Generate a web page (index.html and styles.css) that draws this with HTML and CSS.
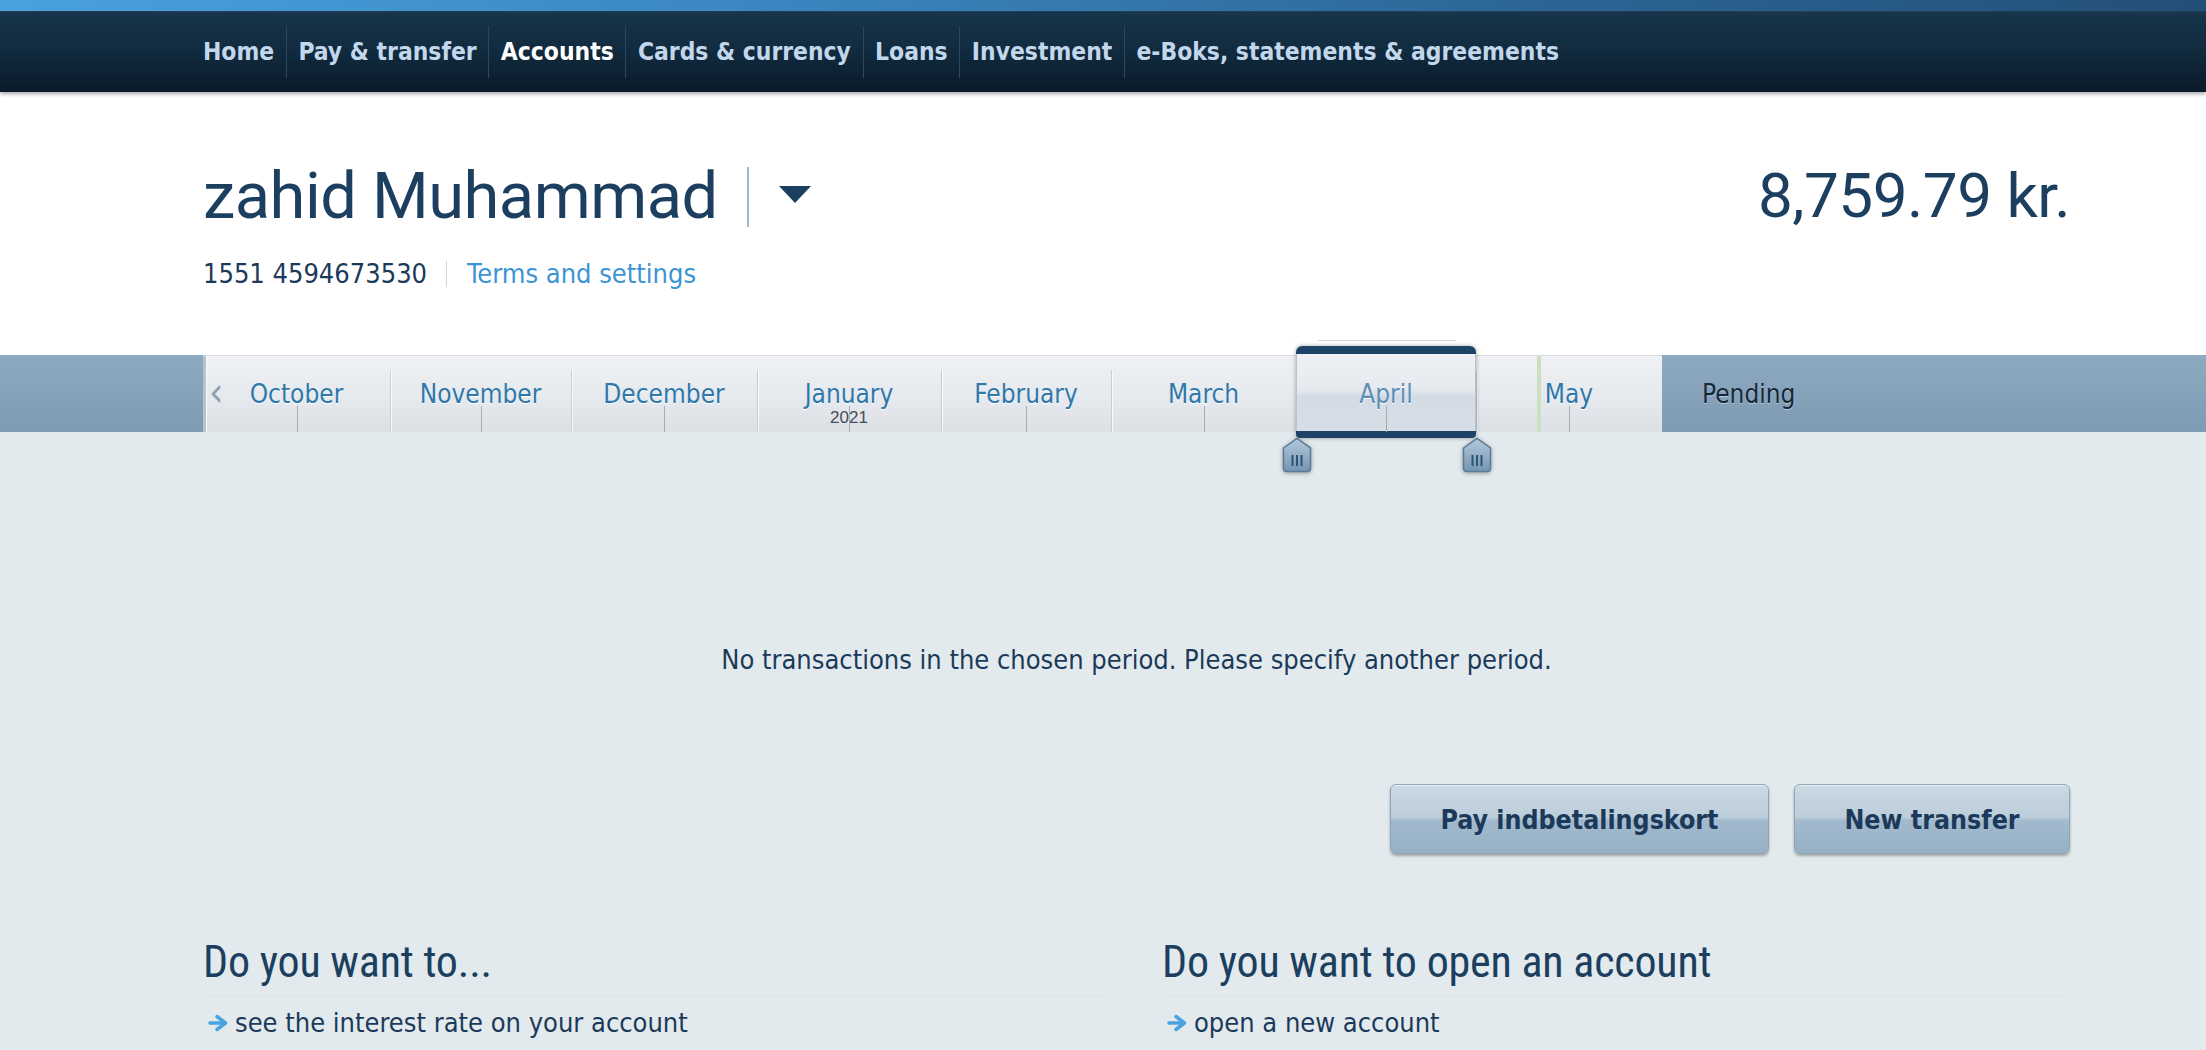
FILE: index.html
```
<!DOCTYPE html>
<html lang="en">
<head>
<meta charset="utf-8">
<title>Accounts</title>
<link rel="stylesheet" href="styles.css">
</head>
<body>
<header class="topnav">
  <div class="topnav__strip"></div>
  <nav class="topnav__bar">
    <ul class="topnav__list">
      <li class="topnav__item">Home</li>
      <li class="topnav__item">Pay &amp; transfer</li>
      <li class="topnav__item topnav__item--active">Accounts</li>
      <li class="topnav__item">Cards &amp; currency</li>
      <li class="topnav__item">Loans</li>
      <li class="topnav__item">Investment</li>
      <li class="topnav__item">e-Boks, statements &amp; agreements</li>
    </ul>
  </nav>
</header>

<section class="account-head">
  <div class="container account-head__row">
    <div class="account-head__title">
      <h1 class="account-name">zahid Muhammad</h1>
      <span class="account-sep"></span>
      <span class="account-toggle">
        <svg width="32" height="17" viewBox="0 0 32 17"><path d="M0 0 H32 L16 17 Z" fill="#1d3f5f"/></svg>
      </span>
    </div>
    <div class="account-balance">8,759.79 kr.</div>
  </div>
  <div class="container account-meta">
    <span class="account-number">1551 4594673530</span>
    <span class="meta-sep"></span>
    <a class="meta-link" href="#">Terms and settings</a>
  </div>
</section>

<section class="period">
  <div class="period__lead"></div>
  <div class="period__months">
    <div class="month month--first"><span class="month__arrow">‹</span><span class="month__label">October</span></div>
    <div class="month"><span class="month__label">November</span></div>
    <div class="month"><span class="month__label">December</span></div>
    <div class="month"><span class="month__label">January</span><span class="month__year">2021</span></div>
    <div class="month"><span class="month__label">February</span></div>
    <div class="month"><span class="month__label">March</span></div>
    <div class="month month--selected">
      <span class="selector"></span>
      <span class="selector__topline"></span>
      <span class="month__label">April</span>
      <svg class="handle handle--left" width="30" height="36" viewBox="0 0 30 36">
        <defs><linearGradient id="hg1" x1="0" y1="0" x2="0" y2="1"><stop offset="0" stop-color="#b3c9dc"/><stop offset="1" stop-color="#7595b1"/></linearGradient></defs>
        <path d="M1.5 11 L15 1.5 L28.5 11 V31 Q28.5 34.5 25 34.5 H5 Q1.5 34.5 1.5 31 Z" fill="url(#hg1)" stroke="#5a7b98" stroke-width="1.5"/>
        <path d="M10.5 18 V29 M15 18 V29 M19.5 18 V29" stroke="#2c5475" stroke-width="2"/>
      </svg>
      <svg class="handle handle--right" width="30" height="36" viewBox="0 0 30 36">
        <defs><linearGradient id="hg2" x1="0" y1="0" x2="0" y2="1"><stop offset="0" stop-color="#b3c9dc"/><stop offset="1" stop-color="#7595b1"/></linearGradient></defs>
        <path d="M1.5 11 L15 1.5 L28.5 11 V31 Q28.5 34.5 25 34.5 H5 Q1.5 34.5 1.5 31 Z" fill="url(#hg2)" stroke="#5a7b98" stroke-width="1.5"/>
        <path d="M10.5 18 V29 M15 18 V29 M19.5 18 V29" stroke="#2c5475" stroke-width="2"/>
      </svg>
    </div>
    <div class="month month--current"><span class="month__today"></span><span class="month__label">May</span></div>
  </div>
  <div class="period__pending">Pending</div>
</section>

<main class="main">
  <p class="container empty">No transactions in the chosen period. Please specify another period.</p>
  <div class="container actions">
    <button class="btn btn--wide">Pay indbetalingskort</button>
    <button class="btn btn--narrow">New transfer</button>
  </div>
  <div class="container promo">
    <div class="promo__col">
      <h2 class="promo__title">Do you want to...</h2>
      <a class="promo__link" href="#">
        <svg width="20" height="18" viewBox="0 0 20 18"><path d="M2 9 H15" stroke="#4aa3e0" stroke-width="3.5" stroke-linecap="round"/><path d="M9 2.5 L17.5 9 L9 15.5" fill="none" stroke="#4aa3e0" stroke-width="3.5" stroke-linecap="round" stroke-linejoin="round"/></svg>
        <span>see the interest rate on your account</span>
      </a>
    </div>
    <div class="promo__col">
      <h2 class="promo__title">Do you want to open an account</h2>
      <a class="promo__link" href="#">
        <svg width="20" height="18" viewBox="0 0 20 18"><path d="M2 9 H15" stroke="#4aa3e0" stroke-width="3.5" stroke-linecap="round"/><path d="M9 2.5 L17.5 9 L9 15.5" fill="none" stroke="#4aa3e0" stroke-width="3.5" stroke-linecap="round" stroke-linejoin="round"/></svg>
        <span>open a new account</span>
      </a>
    </div>
  </div>
</main>
</body>
</html>
```

FILE: styles.css
```
* { box-sizing: border-box; }

html, body {
  margin: 0;
  padding: 0;
}

body {
  width: 2206px;
  height: 1050px;
  overflow: hidden;
  background: #e3eaed;
  font-family: "DejaVu Sans Condensed", "DejaVu Sans", sans-serif;
  font-stretch: condensed;
  color: #1b3a5a;
}

.container {
  margin-left: 203px;
  width: 1867px;
}

/* ---------- top navigation ---------- */
.topnav {
  position: relative;
  z-index: 2;
  box-shadow: 0 2px 4px rgba(0, 0, 0, 0.35);
}

.topnav__strip {
  height: 11px;
  background: linear-gradient(90deg, #4aa1de 0%, #3a86c0 35%, #2c6595 70%, #234f77 100%);
}

.topnav__bar {
  height: 81px;
  background: linear-gradient(180deg, #18354b 0%, #112a3e 50%, #0a1a2a 100%);
  border-top: 1px solid #1f3f56;
  display: flex;
  align-items: center;
}

.topnav__list {
  list-style: none;
  margin: 0 0 0 203px;
  padding: 0;
  display: flex;
  align-items: center;
}

.topnav__item {
  font-weight: bold;
  font-size: 24.4px;
  color: #c3d7ec;
  padding: 0 11.6px;
  height: 52px;
  line-height: 52px;
  border-left: 1px solid #2a4860;
  white-space: nowrap;
}

.topnav__item:first-child {
  padding-left: 0;
  border-left: none;
}

.topnav__item--active {
  color: #ffffff;
}

/* ---------- account header ---------- */
.account-head {
  background: #ffffff;
  padding-top: 72px;
  padding-bottom: 65px;
}

.account-head__row {
  display: flex;
  justify-content: space-between;
  align-items: flex-start;
}

.account-head__title {
  display: flex;
  align-items: center;
}

.account-name {
  margin: 0;
  font-family: Roboto, "Liberation Sans", sans-serif;
  font-stretch: normal;
  font-weight: 400;
  font-size: 65px;
  line-height: 64px;
  letter-spacing: -0.5px;
  color: #1c3f5f;
}

.account-sep {
  width: 2px;
  height: 60px;
  background: #a3b7c9;
  margin-left: 29px;
  margin-top: 2px;
}

.account-toggle {
  display: flex;
  margin-left: 30px;
  margin-top: -4px;
}

.account-balance {
  font-family: Roboto, "Liberation Sans", sans-serif;
  font-stretch: normal;
  font-size: 62px;
  line-height: 64px;
  letter-spacing: -0.5px;
  color: #1c3f5f;
}

.account-meta {
  margin-top: 30px;
  display: flex;
  align-items: center;
  font-size: 27px;
  line-height: 32px;
}

.account-number {
  color: #1b3a5a;
}

.meta-sep {
  width: 1px;
  height: 26px;
  background: #cfd6dd;
  margin: 0 20px 0 19px;
}

.meta-link {
  color: #3b94d4;
  text-decoration: none;
}

/* ---------- period selector ---------- */
.period {
  display: flex;
  height: 77px;
  background: linear-gradient(180deg, #8eaac1 0%, #7f9bb3 100%);
  position: relative;
  z-index: 1;
}

.period__lead {
  width: 203px;
  flex: none;
}

.period__months {
  width: 1459px;
  flex: none;
  display: grid;
  grid-template-columns: 187px 181px 186px 184px 170px 185px 180px 186px;
  background: linear-gradient(180deg, #eff1f4 0%, #e6e9ed 55%, #dcdfe4 100%);
  border-top: 1px solid #d6dbe0;
}

.period__pending {
  flex: 1;
  display: flex;
  align-items: center;
  padding-left: 40px;
  font-size: 26px;
  color: #14283a;
  text-shadow: 0 1px 0 rgba(255, 255, 255, 0.45);
}

.month {
  position: relative;
  display: flex;
  align-items: center;
  justify-content: center;
}

.month::before {
  content: "";
  position: absolute;
  left: 0;
  top: 14px;
  bottom: 0;
  width: 1px;
  background: #c9cdd3;
  box-shadow: 1px 0 0 rgba(255, 255, 255, 0.8);
}

.month::after {
  content: "";
  position: absolute;
  left: 50%;
  top: 50px;
  bottom: 0;
  width: 1px;
  background: #a6acb3;
  z-index: 2;
}

.month--first::before {
  top: 0;
  width: 3px;
  background: #b7c2cc;
}

.month--selected::before {
  display: none;
}

.month__label {
  position: relative;
  z-index: 2;
  font-size: 26px;
  color: #2f78aa;
  text-shadow: 0 1px 0 #ffffff;
  white-space: nowrap;
}

.month--selected .month__label {
  color: #5b8db6;
}

.month__arrow {
  position: absolute;
  left: 6px;
  top: 50%;
  transform: translateY(-54%);
  font-size: 40px;
  color: #8b9fb2;
  font-family: "DejaVu Sans", sans-serif;
}

.month__year {
  position: absolute;
  left: 0;
  right: 0;
  top: 52px;
  text-align: center;
  font-family: "Liberation Sans", Arial, sans-serif;
  font-size: 17px;
  color: #474d55;
}

.month__today {
  position: absolute;
  left: 61px;
  top: 0;
  bottom: 0;
  width: 4px;
  background: #cddfc1;
}

.month--current .month__label {
  z-index: 3;
}

.selector {
  position: absolute;
  left: 0;
  right: 0;
  top: -10px;
  bottom: -6px;
  z-index: 1;
  border-top: 8px solid #1d4466;
  border-bottom: 7px solid #1d4466;
  border-radius: 6px 6px 4px 4px;
  background: linear-gradient(180deg, #eef1f4 0%, #e6eaee 45%, #d3dce4 55%, #d6dee6 100%);
  box-shadow: 0 0 4px rgba(0, 0, 0, 0.35), inset 1px 0 0 #b9c3cc, inset -1px 0 0 #b9c3cc;
}

.selector__topline {
  position: absolute;
  left: 22px;
  right: 20px;
  top: -16px;
  height: 1px;
  background: #cfd9e3;
}

.handle {
  position: absolute;
  top: 81px;
  z-index: 3;
  filter: drop-shadow(0 1px 2px rgba(0, 0, 0, 0.35));
}

.handle--left {
  left: -14px;
}

.handle--right {
  left: 166px;
}

/* ---------- main ---------- */
.main {
  padding-top: 213px;
}

.empty {
  margin-top: 0;
  margin-bottom: 0;
  text-align: center;
  font-size: 27px;
  line-height: 30px;
  color: #1b3a5a;
}

.actions {
  margin-top: 109px;
  display: flex;
  justify-content: flex-end;
  gap: 25px;
}

.btn {
  height: 70px;
  border: 1px solid #8aa4b9;
  border-radius: 6px;
  background: linear-gradient(180deg, #cbd9e3 0%, #bccdda 48%, #a3bace 52%, #97b0c4 100%);
  box-shadow: 0 2px 3px rgba(0, 0, 0, 0.3), inset 0 1px 0 rgba(255, 255, 255, 0.6);
  font-family: "DejaVu Sans Condensed", "DejaVu Sans", sans-serif;
  font-stretch: condensed;
  font-weight: bold;
  font-size: 26.5px;
  color: #1b3a5a;
  padding: 0;
  cursor: pointer;
}

.btn--wide {
  width: 379px;
}

.btn--narrow {
  width: 276px;
}

.promo {
  margin-top: 84px;
  display: grid;
  grid-template-columns: 907px 908px;
  column-gap: 52px;
}

.promo__title {
  margin: 0;
  font-family: Roboto, "Liberation Sans", sans-serif;
  font-stretch: condensed;
  font-weight: 400;
  font-size: 44px;
  line-height: 48px;
  letter-spacing: -0.2px;
  color: #1c3f5f;
  padding-bottom: 9px;
  border-bottom: 1px solid #e4e2dd;
}

.promo__link {
  margin-top: 12px;
  display: flex;
  align-items: center;
  gap: 7px;
  padding-left: 5px;
  font-size: 27px;
  line-height: 30px;
  color: #1b3a5a;
  text-decoration: none;
}
```
